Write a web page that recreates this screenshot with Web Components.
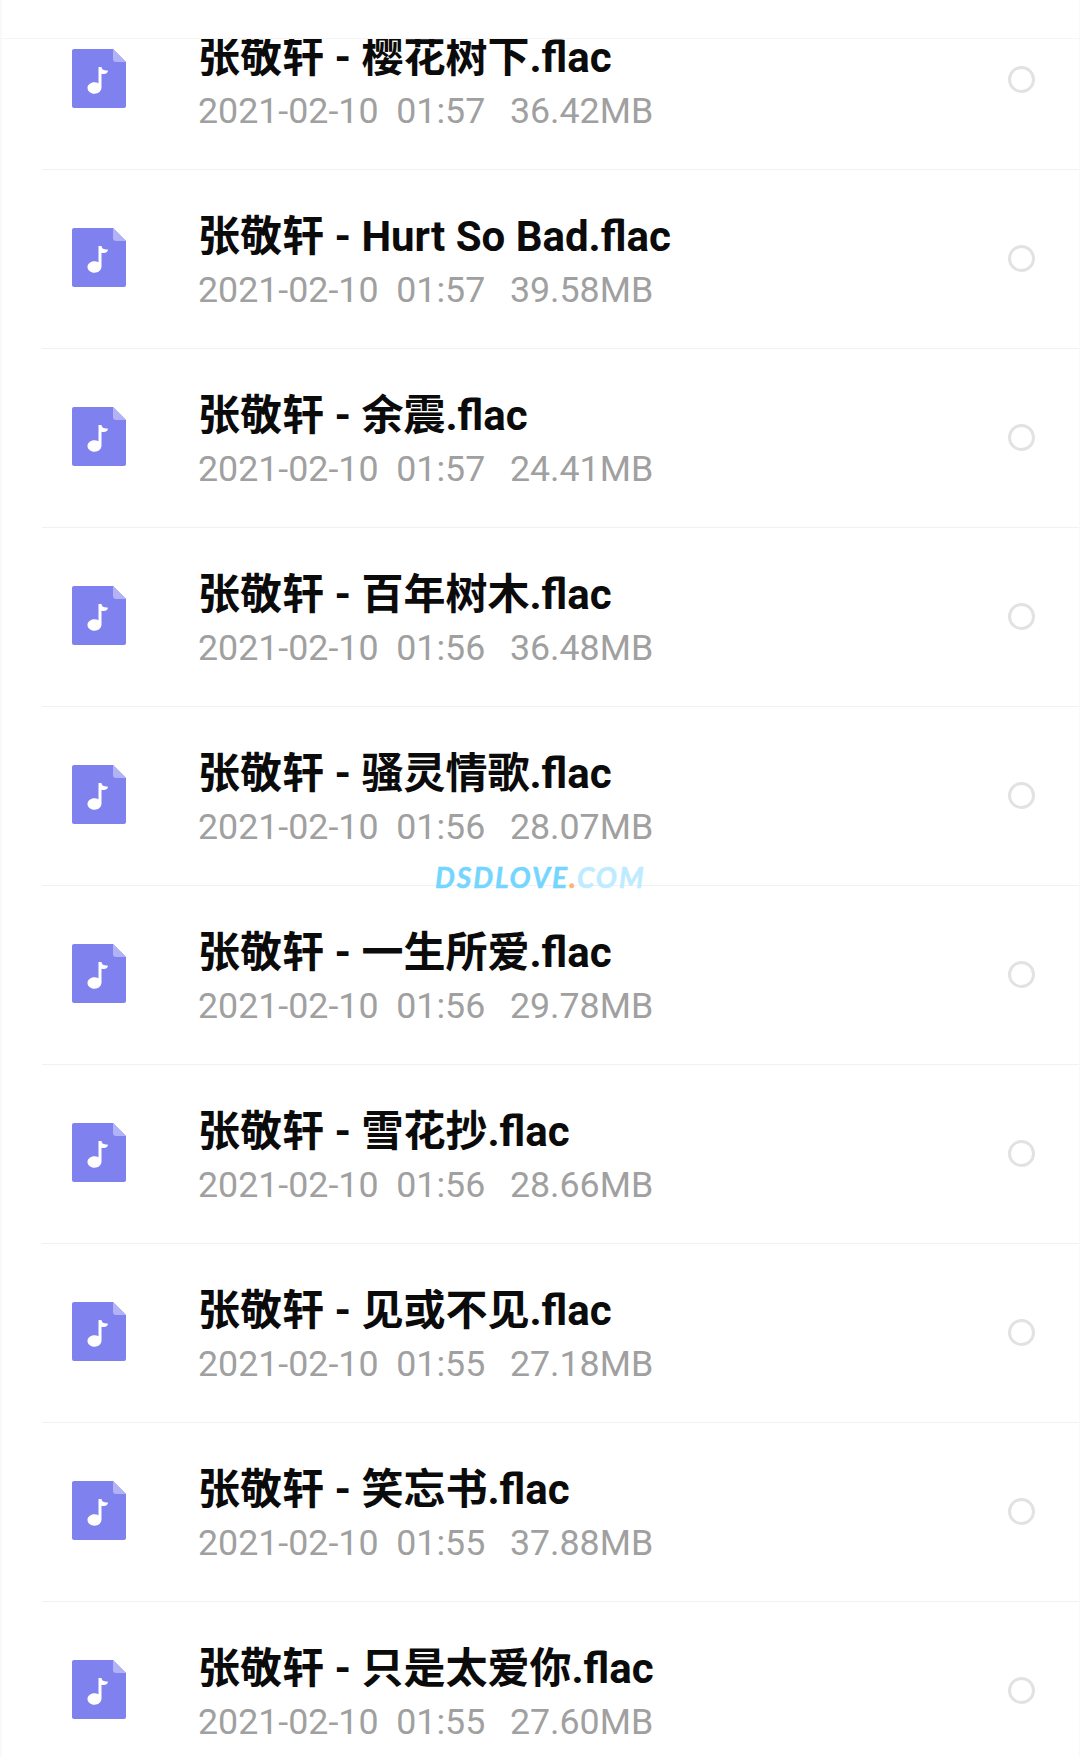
<!DOCTYPE html>
<html><head><meta charset="utf-8">
<style>
html,body{margin:0;padding:0;background:#fff}
body{width:1080px;height:1757px;overflow:hidden}
</style></head><body>
<file-screen>
<file-row name="张敬轩 - 樱花树下.flac" date="2021-02-10" time="01:57" size="36.42MB"></file-row>
<file-row name="张敬轩 - Hurt So Bad.flac" date="2021-02-10" time="01:57" size="39.58MB"></file-row>
<file-row name="张敬轩 - 余震.flac" date="2021-02-10" time="01:57" size="24.41MB"></file-row>
<file-row name="张敬轩 - 百年树木.flac" date="2021-02-10" time="01:56" size="36.48MB"></file-row>
<file-row name="张敬轩 - 骚灵情歌.flac" date="2021-02-10" time="01:56" size="28.07MB"></file-row>
<file-row name="张敬轩 - 一生所爱.flac" date="2021-02-10" time="01:56" size="29.78MB"></file-row>
<file-row name="张敬轩 - 雪花抄.flac" date="2021-02-10" time="01:56" size="28.66MB"></file-row>
<file-row name="张敬轩 - 见或不见.flac" date="2021-02-10" time="01:55" size="27.18MB"></file-row>
<file-row name="张敬轩 - 笑忘书.flac" date="2021-02-10" time="01:55" size="37.88MB"></file-row>
<file-row name="张敬轩 - 只是太爱你.flac" date="2021-02-10" time="01:55" size="27.60MB"></file-row>
<water-mark></water-mark>
</file-screen>
<script>
class FileScreen extends HTMLElement{
  constructor(){super();
    this.attachShadow({mode:'open'}).innerHTML=`<style>
:host{display:block;position:relative;width:1080px;height:1757px;overflow:hidden;background:#fff;box-sizing:border-box;border-left:2px solid #f9f9f9;border-right:1px solid #f9f9f9}
.list{display:flex;flex-direction:column;margin-top:-9px}
.bar{position:absolute;left:0;right:0;top:0;height:38px;background:#fff;border-bottom:1px solid #f6f6f6;z-index:2}
</style><div class="bar"></div><div class="list"><slot></slot></div>`;
  }
}
class FileRow extends HTMLElement{
  constructor(){super();
    this.attachShadow({mode:'open'}).innerHTML=`<style>
:host{display:block;height:179px;box-sizing:border-box;padding-left:40px}
.inner{height:179px;box-sizing:border-box;border-bottom:1px solid #f1f1f1;display:flex;align-items:center}
svg.ic{width:54px;height:59px;margin-left:30px;flex:none;margin-top:-3px}
.txt{margin-left:72px;flex:1;display:flex;flex-direction:column;min-width:0;padding-top:6px}
.t{font:700 42px/48px Roboto,"Noto Sans CJK SC",sans-serif;color:#0b0b0b;white-space:pre;height:48px}
.s{font:400 35.75px/44px Roboto,sans-serif;color:#a0a0a0;white-space:pre;margin-top:7px}
.s span{margin-left:-2px}
.r{box-sizing:border-box;width:27px;height:27px;border:3px solid #e2e2e2;border-radius:50%;margin-right:44px;flex:none;margin-top:-1px}
</style><div class="inner">
<svg class="ic" viewBox="0 0 54 59"><path d="M2 0H41L54 13V57a2 2 0 0 1-2 2H2a2 2 0 0 1-2-2V2a2 2 0 0 1 2-2z" fill="#7f81ef"/><path d="M41 0L54 13H44a3 3 0 0 1-3-3z" fill="#b2b3f6"/><path d="M26.500 18h3c.3 2.500 2 3.500 6 3.500c.4 0 .5.300.4.700c-.5 2-2.400 3.300-6.400 2.500V38.500c0 3.500-3.200 6.200-7 6.200s-7-2.600-7-5.800c0-3.200 3.100-5.700 7-5.700c1.500 0 2.900.4 4 1.100z" fill="#fff"/></svg>
<div class="txt"><div class="t"></div><div class="s"></div></div><div class="r"></div></div>`;
  }
  connectedCallback(){
    const s=this.shadowRoot;
    s.querySelector('.t').textContent=this.getAttribute('name');
    const sub=s.querySelector('.s');
    sub.textContent=this.getAttribute('date')+'  '+this.getAttribute('time')+'   ';
    const sp=document.createElement('span');
    sp.textContent=this.getAttribute('size');
    sub.appendChild(sp);
  }
}
class WaterMark extends HTMLElement{
  constructor(){super();
    this.attachShadow({mode:'open'}).innerHTML=`<style>
:host{position:absolute;left:433px;top:860px;font:italic 700 28px/34px Lato,sans-serif;letter-spacing:2px;color:#74d6ff;-webkit-text-stroke:.5px currentColor;white-space:nowrap;z-index:3}
.d{color:#ffb26e}.c{color:#bdebff}
</style>DSDLOVE<span class="d">.</span><span class="c">COM</span>`;
  }
}
customElements.define('file-screen',FileScreen);
customElements.define('file-row',FileRow);
customElements.define('water-mark',WaterMark);
</script>
</body></html>
